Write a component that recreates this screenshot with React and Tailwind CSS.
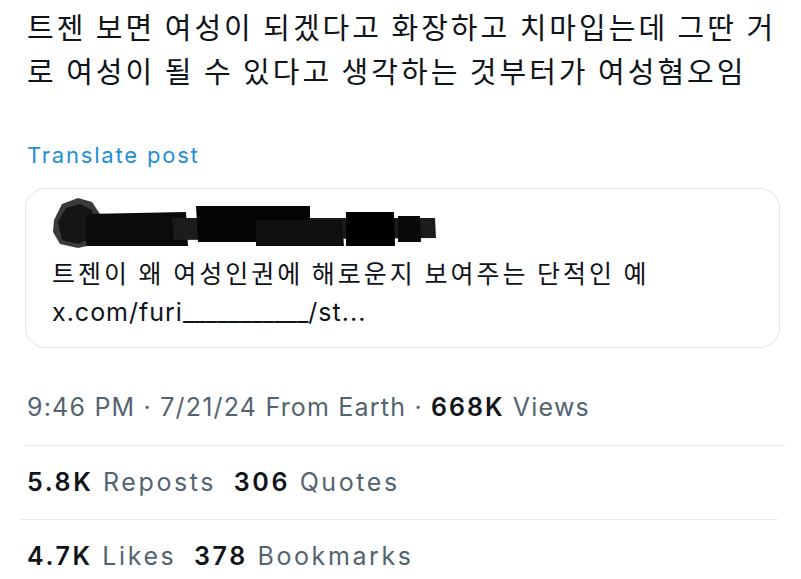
import React from 'react';

function Redaction() {
  // scribbled-out author line
  return (
    <svg width="390" height="50" viewBox="0 0 390 50" className="block">
      <path d="M2 22 L10 6 L26 0 L40 4 L48 16 L50 34 L44 46 L26 50 L8 46 L1 34 Z" fill="#3a3a3a" />
      <path d="M6 24 L14 10 L28 6 L40 12 L44 26 L40 40 L26 46 L10 42 Z" fill="#151515" />
      <path d="M34 16 L134 14 L136 48 L34 48 Z" fill="#0b0b0b" />
      <path d="M120 20 L383 20 L384 40 L122 42 Z" fill="#1c1c1c" />
      <path d="M144 8 L258 8 L258 44 L146 44 Z" fill="#050505" />
      <path d="M204 22 L290 22 L292 48 L204 48 Z" fill="#101010" />
      <path d="M294 14 L342 14 L343 48 L294 48 Z" fill="#000" />
      <path d="M346 18 L368 18 L369 44 L346 44 Z" fill="#0a0a0a" />
    </svg>
  );
}

export default function App() {
  return (
    <div className="w-[801px] h-[579px] bg-white overflow-hidden font-['Inter','Noto_Sans_CJK_KR',sans-serif]">
      <div className="pt-[4px] pl-[27px] pr-[20px] text-[29px] leading-[44px] tracking-[3px] text-[#0f1419] font-['Noto_Sans_CJK_KR',sans-serif]">
        트젠 보면 여성이 되겠다고 화장하고 치마입는데 그딴 거로 여성이 될 수 있다고 생각하는 것부터가 여성혐오임
      </div>
      <div className="mt-[49px] px-[27px] text-[22px] leading-[28px] tracking-[1.8px] text-[#1d8fd6]">Translate post</div>
      <div className="mt-[19px] ml-[25px] mr-[21px] h-[160px] rounded-[20px] border border-[#e3e5e8] pl-[26px] pt-[9px]">
        <Redaction />
        <div className="mt-[4px] text-[25px] leading-[40px] tracking-[3px] text-[#0f1419] font-['Noto_Sans_CJK_KR',sans-serif]">
          트젠이 왜 여성인권에 해로운지 보여주는 단적인 예
        </div>
        <div className="text-[25px] leading-[40px] tracking-[1px] text-[#0f1419]">
          x.com/furi<span className="tracking-normal">___________</span>/st...
        </div>
      </div>
      <div className="mt-[43px] px-[27px] text-[25px] leading-[32px] tracking-[1.2px] text-[#536471]">
        9:46 PM · 7/21/24 From Earth · <span className="font-semibold tracking-[2px] text-[#0f1419]">668K</span> Views
      </div>
      <div className="mt-[22px] ml-[25px] mr-[16px] border-t border-[#e8eaec]" />
      <div className="mt-[20px] px-[27px] text-[25px] leading-[32px] tracking-[2.6px] text-[#536471]">
        <span className="font-semibold text-[#0f1419]">5.8K</span> Reposts{' '}
        <span className="ml-[8px] font-semibold text-[#0f1419]">306</span> Quotes
      </div>
      <div className="mt-[21px] ml-[20px] mr-[23px] border-t border-[#e8eaec]" />
      <div className="mt-[20px] px-[27px] text-[25px] leading-[32px] tracking-[2.6px] text-[#536471]">
        <span className="font-semibold text-[#0f1419]">4.7K</span> Likes{' '}
        <span className="ml-[8px] font-semibold text-[#0f1419]">378</span> Bookmarks
      </div>
    </div>
  );
}
